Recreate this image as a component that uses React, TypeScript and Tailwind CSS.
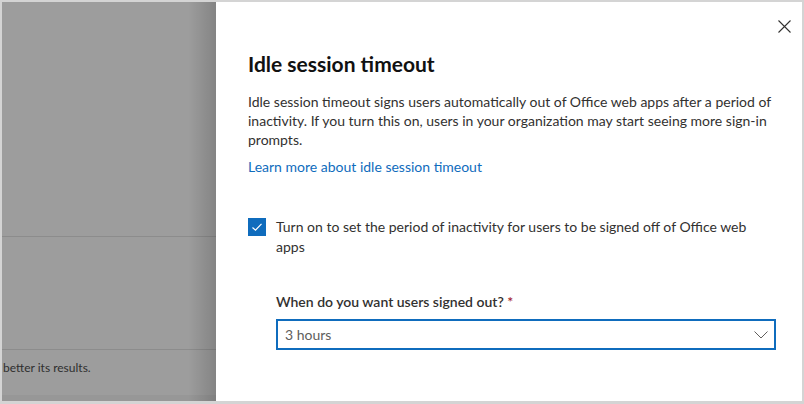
import React from "react";

export default function App() {
  const font = { fontFamily: 'Lato, "Open Sans", sans-serif' };
  return (
    <div className="w-[804px] h-[404px] bg-[#d4d4d4] pt-[2px] pl-[2px] pr-[2px] pb-[3px] overflow-hidden" style={font}>
      <div className="flex h-full">
        {/* left dimmed area */}
        <div className="relative w-[214px] h-full bg-[#9d9d9d] flex flex-col overflow-hidden">
          <div className="h-[234px]" />
          <div className="h-px bg-[#8c8c8c]" />
          <div className="h-[112px]" />
          <div className="h-px bg-[#8c8c8c]" />
          <div className="pl-[1px] pt-[10px] text-[12px] text-[#2f2f2f] leading-[16px]">better its results.</div>
          <div className="flex-1" />
          <div className="h-[6px] bg-[#979797]" />
          <div className="absolute top-0 right-0 h-full w-[28px] bg-gradient-to-r from-[rgba(0,0,0,0)] to-[rgba(0,0,0,0.16)]" />
        </div>
        {/* panel */}
        <div className="relative flex-1 bg-white h-full pl-[32px] pr-[26px]">
          <button className="absolute top-[16px] right-[10px] w-[16px] h-[16px] flex items-center justify-center">
            <svg width="13" height="13" viewBox="0 0 13 13">
              <path d="M0.5 0.5 L12.5 12.5 M12.5 0.5 L0.5 12.5" stroke="#323130" strokeWidth="1.1" fill="none" />
            </svg>
          </button>
          <h1 className="mt-[48px] text-[21px] leading-[28px] font-bold text-[#111] whitespace-nowrap">Idle session timeout</h1>
          <p className="mt-[14px] text-[14px] leading-[19px] text-[#323130] whitespace-nowrap">
            Idle session timeout signs users automatically out of Office web apps after a period of<br />
            inactivity. If you turn this on, users in your organization may start seeing more sign-in<br />
            prompts.
          </p>
          <div className="mt-[8px] text-[14px] leading-[19px] text-[#0f6cbd]">Learn more about idle session timeout</div>
          <div className="mt-[41px] flex items-start gap-[10px]">
            <div className="mt-[1px] w-[18px] h-[18px] bg-[#0f6cbd] flex items-center justify-center shrink-0">
              <svg width="12" height="12" viewBox="0 0 12 12">
                <path d="M1.5 6.5 L4.5 9.2 L10.5 2.8" stroke="white" strokeWidth="1.2" fill="none" />
              </svg>
            </div>
            <div className="text-[14px] leading-[20px] text-[#323130] whitespace-nowrap">
              Turn on to set the period of inactivity for users to be signed off of Office web<br />apps
            </div>
          </div>
          <div className="pl-[28px]">
            <div className="mt-[35px] text-[14px] leading-[19px] font-semibold text-[#323130]">
              When do you want users signed out? <span className="text-[#a4262c]">*</span>
            </div>
            <div className="mt-[8px] h-[31px] border-2 border-[#0f6cbd] flex items-center justify-between pl-[7px] pr-[6px]">
              <span className="text-[14px] text-[#605e5c]">3 hours</span>
              <svg width="14" height="8" viewBox="0 0 14 8">
                <path d="M0.5 0.5 L7 7 L13.5 0.5" stroke="#605e5c" strokeWidth="1" fill="none" />
              </svg>
            </div>
          </div>
        </div>
      </div>
    </div>
  );
}
